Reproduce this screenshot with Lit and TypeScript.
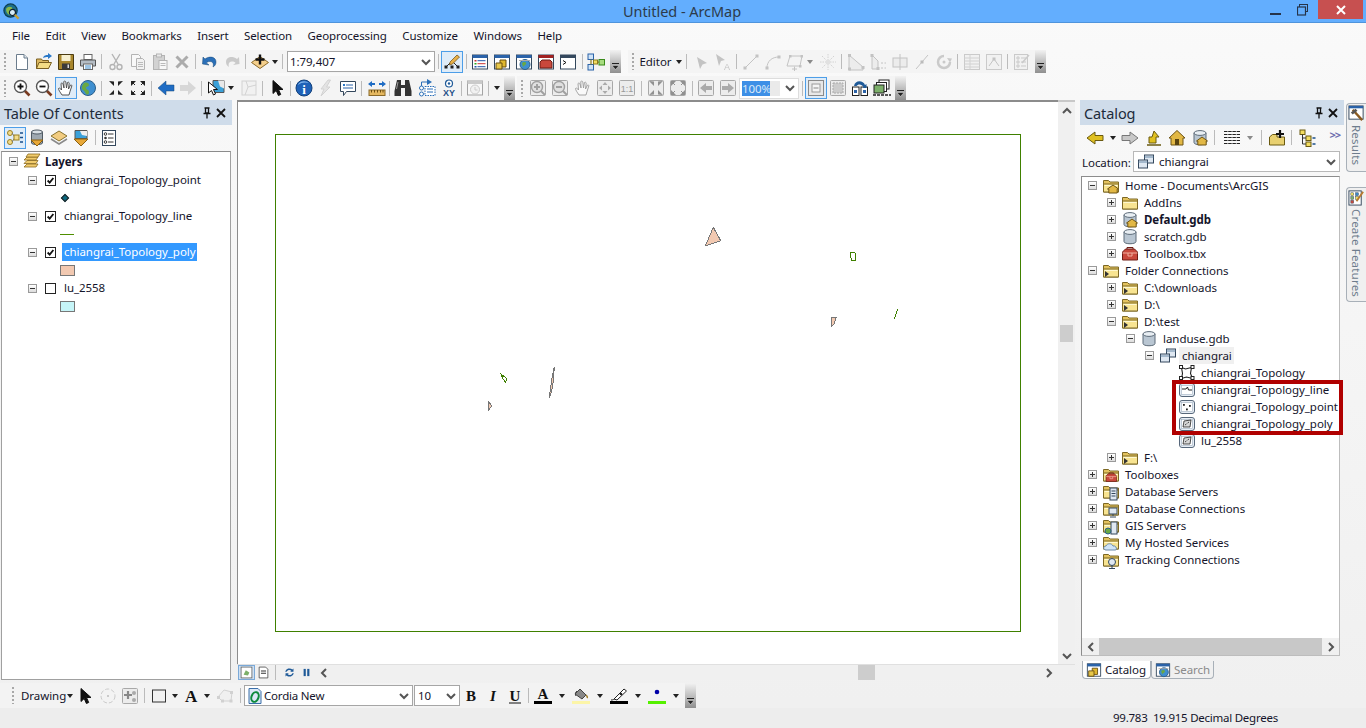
import { LitElement, html, svg, css } from 'lit';
import { customElement } from 'lit/decorators.js';

// ---- icon pieces, all on an 18x18 grid ----
const BLUE = '#2a6fb8';
const folderBase = svg`<path d="M1.500 15V3.500h5l1.500 1.500h8.500V15z" fill="#e3c25e" stroke="#7d6824"/><path d="M1.500 15V7h15v8z" fill="#f8e491" stroke="#7d6824"/><path d="M2.500 8.500h13" stroke="#fff8d0"/>`;
const cyl = svg`<path d="M3 4v9.500c0 3 12 3 12 0V4z" fill="#b9c6d2" stroke="#5d6b78"/><ellipse cx="9" cy="4" rx="6" ry="2.400" fill="#e8eef3" stroke="#5d6b78"/>`;
const house = svg`<path d="M9 9l5.500 4h-1.300v4H4.800v-4H3.500z" transform="translate(2 -1)" fill="#e2b845" stroke="#6e5414"/>`;
const toolbox = svg`<path d="M1.500 7l3-3h9l3 3v8h-15z" fill="#c9483c" stroke="#6e1c14"/><path d="M1.500 8h15M7 8v3h4V8" stroke="#f0b0a0" fill="none"/><path d="M6 4V2.500h6V4" stroke="#6e1c14" fill="none"/>`;
const win = (c: string, inner: unknown) => svg`<rect x="1.500" y="2" width="15" height="14" fill="#fff" stroke="#33475c"/><rect x="1.500" y="2" width="15" height="3" fill="${c}"/>${inner}`;
const glove = svg`<path d="M5 16c-2-3-3.500-5-3.500-6.500 1-1 2 0 3 1.500L4 4.500c1-1 1.800 0 2 .5l1 4-.2-6.500c1-.8 1.800-.2 2 .5L9.500 9l1-5.500c1-.6 1.600 0 1.700.6L11.500 10l2-4c1-.2 1.500.3 1.300 1L13 12.500 12 16z" fill="#fff" stroke="#444" stroke-width=".9"/>`;
const globe = svg`<circle cx="9" cy="9" r="7.500" fill="#3f8fd0" stroke="#2b5f8a"/><path d="M5 4c3-1 5 0 5 2s-3 1-3 3 3 1 3 4-2 3-3 2-1-3-3-4-1-5 1-7z" fill="#6aa843"/>`;
const magnifier = (mark: unknown) => svg`<path d="M11.500 11.500l5 5" stroke="#7a3b20" stroke-width="2.600"/><circle cx="7.500" cy="7.500" r="6" fill="#fff" stroke="#555" stroke-width="1.400"/>${mark}`;
const plus = svg`<path d="M4.500 7.500h6M7.500 4.500v6" stroke="#111" stroke-width="1.800"/>`;
const minus = svg`<path d="M4.500 7.500h6" stroke="#111" stroke-width="1.800"/>`;
const arrowsIn = svg`<g fill="#222"><path d="M2 2l5 5V2.500zM16 2l-5 5V2.500z"/><path d="M2 16l5-5v4.500zM16 16l-5-5v4.500z"/></g>`;
const arrowsOut = svg`<g fill="#222"><path d="M7 2H2v5zM11 2h5v5zM7 16H2v-5zM11 16h5v-5z"/><path d="M3 3l3 3M15 3l-3 3M3 15l3-3M15 15l-3-3" stroke="#222"/></g>`;
const greyBox = (inner: unknown) => svg`<rect x="1.500" y="1.500" width="15" height="15" rx="1" fill="#ececec" stroke="#a8a8a8"/>${inner}`;
const cursor = svg`<path d="M4 1.500v13l3.200-3 2.200 5 2.300-1-2.200-5h4.500z" fill="#111" stroke="#111"/>`;
const featureClass = (inner: unknown) => svg`<rect x="1.500" y="2.500" width="15" height="13" rx="2.500" fill="#e6edf5" stroke="#56677a"/><rect x="3.500" y="4.500" width="11" height="9" fill="#fff" stroke="#9fb0c0" stroke-width=".6"/>${inner}`;
const barLetter = (style: string, letter: string, underline = false) =>
  svg`<text x="9" y="14" text-anchor="middle" font-family="Liberation Serif" font-size="15" fill="#111" style="${style}">${letter}</text>${underline ? svg`<path d="M3 16h12" stroke="#111"/>` : ''}`;
const swatchLetter = svg`<text x="9" y="12" text-anchor="middle" font-family="Liberation Serif" font-weight="700" font-size="15" fill="#111">A</text><rect x="0" y="14" width="18" height="3" fill="#000"/>`;

const ICONS: Record<string, unknown> = {
  new: svg`<path d="M3.500 1.500h7.500l3.500 3.500v11.500h-11z" fill="#fff" stroke="#6b7c8c"/><path d="M11 1.500v3.500h3.500" fill="#dde5ec" stroke="#6b7c8c"/>`,
  open: svg`<path d="M1.500 15.500V6h5l1 1.500h6v8z" fill="#dcb860" stroke="#7a5f20"/><path d="M1.500 15.500l2.500-6h12.500l-3 6z" fill="#f5dc84" stroke="#7a5f20"/><path d="M8 5c1-3 3-3 5-3V0l4 3-4 3V4c-2 0-3 0-5 1z" fill="#2a78c8"/>`,
  save: svg`<path d="M1.500 1.500h15v15h-15z" fill="#a8862c" stroke="#4a3a10"/><rect x="4.500" y="2" width="9" height="6" fill="#f6efd0"/><rect x="5" y="10.500" width="8" height="6" fill="#3a3a3a"/><rect x="10.500" y="11.500" width="1.500" height="3.500" fill="#ddd"/>`,
  print: svg`<rect x="5" y="1.500" width="8" height="5" fill="#fff" stroke="#666"/><path d="M1.500 7h15v6h-15z" fill="#b4bcc4" stroke="#555"/><rect x="4.500" y="11" width="9" height="5.500" fill="#fff" stroke="#666"/><path d="M6 13h6M6 15h6" stroke="#3a88c8"/>`,
  cut: svg`<path d="M5 1l6 10M13 1L7 11" stroke="#666" stroke-width="1.400"/><circle cx="5.500" cy="14" r="2.500" fill="none" stroke="#666" stroke-width="1.400"/><circle cx="12.500" cy="14" r="2.500" fill="none" stroke="#666" stroke-width="1.400"/>`,
  copy: svg`<path d="M2.500 1.500h7l2 2v10h-9z" fill="#fff" stroke="#666"/><path d="M7.500 5.500h6l2 2v9h-8z" fill="#eee" stroke="#666"/><path d="M9 9.500h5M9 11.500h5M9 13.500h5" stroke="#777"/>`,
  paste: svg`<rect x="2.500" y="2.500" width="11" height="14" fill="#aaa" stroke="#666"/><rect x="5.500" y="1" width="5" height="3" fill="#ddd" stroke="#666"/><rect x="8" y="7.500" width="8" height="9" fill="#fff" stroke="#666"/><path d="M9.500 10.500h5M9.500 12.500h5" stroke="#777"/>`,
  del: svg`<path d="M3.500 3.500l11 11M14.500 3.500l-11 11" stroke="#555" stroke-width="3"/>`,
  undo: svg`<path d="M4 6c5-3.500 11-2 11 3 0 2-1 4-3 5 1-3 0-5.500-3-5.500-2 0-3 .5-3.500 1.500L8 12 1.500 11 2 4z" fill="${BLUE}" stroke="#174878" stroke-width=".5"/>`,
  redo: svg`<path d="M14 6C9 2.500 3 4 3 9c0 2 1 4 3 5-1-3 0-5.500 3-5.500 2 0 3 .5 3.500 1.500L10 12l6.500-1L16 4z" fill="#999"/>`,
  add: svg`<path d="M9 3.500L17.500 9.500 9 15.500.5 9.500z" fill="#f4cf8c" stroke="#8a6a2a"/><path d="M9 1.500v10M4.500 6.500h9" stroke="#111" stroke-width="2.400"/>`,
  edit: svg`<path d="M3 14L9 8l6 6" fill="none" stroke="#222"/><rect x="1.500" y="12.500" width="3" height="3" fill="#222"/><rect x="7.500" y="12.500" width="3" height="3" fill="#222"/><rect x="13.500" y="12.500" width="3" height="3" fill="#222"/><path d="M7 9l7-7 2.500 2-7 7-3 1z" fill="#e8b048" stroke="#6a4c10" stroke-width=".7"/>`,
  toc: win('#2a62a8', svg`<rect x="3.500" y="7" width="2" height="1.500" fill="#c33"/><path d="M6.500 7.700h8" stroke="#25a"/><rect x="3.500" y="10" width="2" height="1.500" fill="#2a2"/><path d="M6.500 10.700h8" stroke="#c33"/><rect x="3.500" y="13" width="2" height="1.500" fill="#25a"/><path d="M6.500 13.700h8" stroke="#25a"/>`),
  catWin: win('#2a62a8', svg`<path d="M7 7h6v7H7z" fill="#e0b830" stroke="#6a5010"/><path d="M3 10h6v6H3z" fill="#e8c84a" stroke="#6a5010"/>`),
  searchWin: win('#2a62a8', svg`<circle cx="10" cy="11.500" r="5" fill="#3f8fd0" stroke="#2b5f8a"/><path d="M7 10c2-2 5-1 4 1s-2 1-3 3z" fill="#6aa843"/><path d="M4 7.500h11" stroke="#aaa"/>`),
  toolWin: win('#a02020', svg`<path d="M3 9l2-2h8l2 2v6H3z" fill="#c9483c" stroke="#6e1c14"/>`),
  pyWin: win('#33475c', svg`<path d="M4 7.500l3 2-3 2" fill="none" stroke="#111"/>`),
  model: svg`<rect x="1" y="1" width="5.500" height="5.500" fill="#cfe3f7" stroke="#2a62a8"/><rect x="1" y="11.500" width="5.500" height="5.500" fill="#cfe3f7" stroke="#2a62a8"/><rect x="12" y="6.500" width="5.500" height="5.500" fill="#a8dc80" stroke="#3a8a1a"/><path d="M4 6.500v5M6.500 9.200H12" stroke="#8a7a20" stroke-width="1.200"/><rect x="6.500" y="7" width="4" height="4" fill="#f2dc60" stroke="#8a7a20"/>`,
  arrowTool: svg`<path d="M5 4l10 6-4.500 1.500L8 16z" fill="#888"/>`,
  arrowA: svg`<path d="M2 1l9 6-4 1-2 5z" fill="#888"/><text x="13" y="17" text-anchor="middle" font-family="Liberation Sans" font-size="9" fill="#888">A</text>`,
  line: svg`<path d="M3 15L15 3" stroke="#888"/><rect x="1.500" y="13.500" width="3" height="3" fill="#888"/><rect x="13.500" y="1.500" width="3" height="3" fill="#888"/>`,
  arc: svg`<path d="M3 15C3 8 8 4 15 4" fill="none" stroke="#888"/><rect x="1.500" y="13.500" width="3" height="3" fill="#888"/><rect x="13.500" y="2.500" width="3" height="3" fill="#888"/>`,
  polyEd: svg`<path d="M4 3h12l-2 10H1z" fill="none" stroke="#888"/><path d="M6 16h5M8.500 13.500v5" stroke="#888"/><g fill="#888"><rect x="3" y="2" width="2.500" height="2.500"/><rect x="14.500" y="2" width="2.500" height="2.500"/><rect x="13" y="12" width="2.500" height="2.500"/></g>`,
  burst: svg`<g stroke="#aaa" stroke-dasharray="1.500 1"><path d="M9 1v16M1 9h16M3 3l12 12M15 3L3 15"/></g><circle cx="9" cy="9" r="2.500" fill="#ccc"/>`,
  cutPoly: svg`<path d="M2 2l14 12v3H2z" fill="#e4e4e4" stroke="#888"/><g fill="#888"><rect x="1" y="1" width="3" height="3"/><rect x="14.500" y="13" width="3" height="3"/><rect x="1" y="14.500" width="3" height="3"/></g>`,
  split: svg`<path d="M3 2v14h6V8z" fill="#e4e4e4" stroke="#888"/><path d="M12 15h5M12 10h5" stroke="#888" stroke-dasharray="2 1.500"/><g fill="#888"><rect x="1.500" y="1" width="3" height="3"/><rect x="7.500" y="14" width="3" height="3"/></g>`,
  reshape: svg`<rect x="2" y="5" width="14" height="9" fill="#e4e4e4" stroke="#888"/><path d="M9 1v16" stroke="#888"/>`,
  slash: svg`<path d="M3 16L15 2" stroke="#888"/><rect x="7.500" y="7.500" width="3" height="3" fill="#777"/>`,
  rotate: svg`<path d="M9 3a6 6 0 1 0 6 6" fill="none" stroke="#999" stroke-width="2.500"/><path d="M12 5l5 .5-2 4z" fill="#999"/><circle cx="9" cy="9" r="1.500" fill="#999"/>`,
  attrs: svg`<rect x="1.500" y="1.500" width="15" height="15" fill="#eee" stroke="#999"/><path d="M1.500 5h15M1.500 8h15M1.500 11h15M1.500 14h15" stroke="#aaa"/><path d="M7 1.500v15" stroke="#aaa"/>`,
  sketch: svg`<rect x="1.500" y="1.500" width="15" height="15" fill="#eee" stroke="#999"/><path d="M4 13l5-7 5 7" fill="none" stroke="#888"/><rect x="7.500" y="4.500" width="3" height="3" fill="#888"/>`,
  form: svg`<rect x="1.500" y="1.500" width="13" height="15" fill="#eee" stroke="#999"/><path d="M4 4h2v2H4zM4 8h2v2H4zM4 12h2v2H4zM8 5h5M8 9h5M8 13h5" fill="none" stroke="#999"/><path d="M9 10l7-8" stroke="#999" stroke-width="1.500"/>`,
  zoomIn: magnifier(plus),
  zoomOut: magnifier(minus),
  hand: glove,
  globe,
  fixedIn: arrowsIn,
  fixedOut: arrowsOut,
  back: svg`<path d="M1 9l8-7v4h8v6H9v4z" fill="#1f6cc4" stroke="#174878" stroke-width=".5"/>`,
  fwd: svg`<path d="M17 9L9 2v4H1v6h8v4z" fill="#b5b5b5"/>`,
  selFeat: svg`<path d="M6 1.500h11v12H6z" fill="#3aa0d8" stroke="#555"/><path d="M11 1.500l2 6 4 2v-8z" fill="#e8e8e8"/><path d="M1.500 3v11l3-2.500 2 4.500 2-1-2-4.500h4z" fill="#fff" stroke="#111"/>`,
  clear: svg`<rect x="2" y="2" width="14" height="14" fill="#efefef" stroke="#aaa"/><path d="M6 2l2 6-3 8M8 8l8-2" fill="none" stroke="#aaa"/>`,
  select: cursor,
  info: svg`<circle cx="9" cy="9" r="8" fill="#1f62b8" stroke="#12407a"/><path d="M7 2.500a7 5 0 0 1 7 1.500c-3-1-8-1-11 2 0-1.500 2-3 4-3.500z" fill="#7fb4ea"/><text x="9" y="15" text-anchor="middle" font-family="Liberation Serif" font-weight="700" font-size="13" fill="#fff">i</text>`,
  bolt: svg`<path d="M11 1L4 10h3l-3 7 9-9H9.500l4-7z" fill="#d0d0d0" stroke="#aaa"/>`,
  popup: svg`<path d="M1.500 2.500h15v10h-9l-3 4v-4h-3z" fill="#fff" stroke="#33475c"/><path d="M4 5h2v2H4z" fill="#2a78c8"/><path d="M7 6h7M4 9h10" stroke="#2a62a8"/>`,
  measure: svg`<rect x="1" y="11" width="16" height="5.500" fill="#e5b860" stroke="#8a6a2a"/><path d="M3.500 11v2.500M6.500 11v2.500M9.500 11v2.500M12.500 11v2.500M15 11v2.500" stroke="#6a4c10"/><path d="M0 5l4-3v2h3v2H4v2zM18 5l-4-3v2h-3v2h3v2z" fill="#1f6cc4"/>`,
  binoc: svg`<path d="M3 1h4v5h4V1h4l2.500 11v5H11V9H7v8H.5v-5z" fill="#333"/><path d="M4 3l-1.500 7" stroke="#999"/>`,
  route: svg`<circle cx="3.500" cy="9" r="2" fill="#fff" stroke="${BLUE}"/><circle cx="3.500" cy="15" r="2" fill="#fff" stroke="${BLUE}"/><path d="M3.500 7V3h6" fill="none" stroke="${BLUE}"/><path d="M9 0l5 3-5 3z" fill="${BLUE}"/><rect x="7" y="7.500" width="10" height="9" fill="#fff" stroke="${BLUE}" stroke-dasharray="1.500 1"/><path d="M9 10h6M9 13h6" stroke="${BLUE}"/>`,
  xy: svg`<circle cx="9" cy="4.500" r="3.500" fill="#fff" stroke="#1f5a98" stroke-width="1.200"/><circle cx="9" cy="4.500" r="1.200" fill="#1f5a98"/><text x="9" y="17" text-anchor="middle" font-family="Liberation Sans" font-weight="700" font-size="9" fill="#1f4f88">XY</text>`,
  clock: win('#999', svg`<circle cx="9" cy="10.500" r="4.500" fill="#eee" stroke="#999"/><path d="M9 8v3h2.500" fill="none" stroke="#999"/>`),
  viewer: svg`<rect x="1.500" y="2" width="15" height="13" fill="#fff" stroke="#33475c"/><rect x="1.500" y="2" width="15" height="2.500" fill="#2a62a8"/><circle cx="8" cy="9.500" r="3.500" fill="#fff" stroke="#333"/><path d="M6.300 9.500h3.400M8 7.800v3.400" stroke="#111"/><path d="M10.500 12l4 4.500" stroke="#7a3b20" stroke-width="2"/>`,
  gIn: greyBox(svg`<circle cx="8" cy="8" r="5.500" fill="#e0e0e0" stroke="#a0a0a0" stroke-width="1.400"/><path d="M5 8h6M8 5v6" stroke="#a0a0a0" stroke-width="2"/><path d="M12 12l4 4" stroke="#a0a0a0" stroke-width="2"/>`),
  gOut: greyBox(svg`<circle cx="8" cy="8" r="5.500" fill="#e0e0e0" stroke="#a0a0a0" stroke-width="1.400"/><path d="M5 8h6" stroke="#a0a0a0" stroke-width="2"/><path d="M12 12l4 4" stroke="#a0a0a0" stroke-width="2"/>`),
  gHand: svg`<g opacity=".5">${glove}</g>`,
  gFull: greyBox(svg`<path d="M9 3l2.500 3h-5zM9 15l2.500-3h-5zM3 9l3-2.500v5zM15 9l-3-2.500v5z" fill="#aaa"/>`),
  g11: greyBox(svg`<text x="9" y="13" text-anchor="middle" font-family="Liberation Sans" font-size="9" fill="#999">1:1</text>`),
  gFixIn: greyBox(svg`<g opacity=".45">${arrowsIn}</g>`),
  gFixOut: greyBox(svg`<g opacity=".45">${arrowsOut}</g>`),
  gBack: greyBox(svg`<path d="M3 9l6-5v3h6v4H9v3z" fill="#aaa"/>`),
  gFwd: greyBox(svg`<path d="M15 9L9 4v3H3v4h6v3z" fill="#aaa"/>`),
  page: svg`<rect x="1.500" y="1.500" width="15" height="15" fill="#e8e8e8" stroke="#8a8a8a"/><rect x="5" y="5" width="8" height="8" fill="#f4f4f4" stroke="#9a9a9a"/><path d="M6.500 9h5" stroke="#888"/>`,
  pageGrey: greyBox(svg`<path d="M4 4h10v10H4z" fill="#ccc" stroke="#aaa" stroke-dasharray="2 1"/>`),
  swap: svg`<rect x="1.500" y="8" width="6.500" height="8.500" fill="#fff" stroke="#222"/><rect x="10" y="8" width="6.500" height="8.500" fill="#fff" stroke="#222"/><rect x="3" y="11" width="3" height="3" fill="#2a62a8"/><rect x="12" y="11" width="3" height="3" fill="#2a62a8"/><path d="M3 7c1-6 9-6 11-1l1.500-1v4h-4l1-1C11 5 7 4.500 5.500 7z" fill="#1f5a98"/>`,
  frames: svg`<rect x="6" y="1" width="10" height="9" fill="#fff" stroke="#222"/><rect x="3.500" y="3.500" width="10" height="9" fill="#fff" stroke="#222"/><rect x="1" y="6" width="10" height="8" fill="#7cb06a" stroke="#222"/><path d="M0 16h18" stroke="#222" stroke-width="1.500" stroke-dasharray="3 1"/>`,
  byDraw: svg`<circle cx="4" cy="4" r="2.500" fill="#f2dc8a" stroke="#9a8020"/><circle cx="4" cy="13" r="2.500" fill="#f2dc8a" stroke="#9a8020"/><path d="M6 4l3 4.500L6 13" fill="none" stroke="#777"/><rect x="8" y="6" width="5" height="5" fill="#f2dc8a" stroke="#9a8020"/><path d="M14 4h3M14 8.500h3M14 13h3" stroke="#1a4f8a" stroke-width="1.500"/>`,
  bySource: svg`<path d="M3.500 3v11c0 2 11 2 11 0V3z" fill="#9ea8b0" stroke="#4f5a64"/><ellipse cx="9" cy="3" rx="5.500" ry="2" fill="#d8dfe4" stroke="#4f5a64"/><path d="M3 11h12l-6 6z" fill="#e8a838" stroke="#8a6010"/>`,
  byVis: svg`<path d="M9 2l8 5-8 5-8-5z" fill="#f2cc80" stroke="#8a7430"/><path d="M1 10l8 5 8-5" fill="none" stroke="#8a8a8a" stroke-width="1.500"/>`,
  bySel: svg`<path d="M3 1.500h12v8H3z" fill="#3aa0d8" stroke="#555"/><path d="M8 2l2 4 5 1V2z" fill="#eee"/><path d="M2 10h14l-7 7z" fill="#e8a838" stroke="#8a6010"/>`,
  options: svg`<rect x="2.500" y="1.500" width="13" height="15" fill="#fff" stroke="#33475c"/><circle cx="5.500" cy="5" r="1.300" fill="none" stroke="#333"/><circle cx="5.500" cy="9" r="1.300" fill="#333"/><circle cx="5.500" cy="13" r="1.300" fill="none" stroke="#333"/><path d="M8 5h5.500M8 9h5.500M8 13h5.500" stroke="#333"/>`,
  yBack: svg`<path d="M1 9l8-6v3.500h8v5H9V15z" fill="#e0c020" stroke="#6a5a10"/>`,
  gFwd2: svg`<path d="M17 9L9 3v3.500H1v5h8V15z" fill="#c8c8c8" stroke="#777"/>`,
  up: svg`<path d="M9 2l5 6h-3v6H4V8h3z" fill="#e0c020" stroke="#6a5a10"/><path d="M2 16h14" stroke="#6a5a10" stroke-width="1.500"/>`,
  home: svg`<path d="M9 1.500L17 9h-2v7H3V9H1z" fill="#e2b845" stroke="#6e5414"/><rect x="7" y="10" width="4" height="6" fill="#5a4410"/>`,
  homeGdb: svg`${cyl}${house}`,
  grid: svg`<path d="M1 2.500h16M1 5.500h16M1 8.500h16M1 11.500h16M1 14.500h16" stroke="#222" stroke-dasharray="3.500 .7"/>`,
  newFolder: svg`<path d="M1.500 16V8l3-2.500H9V8h7.500v8z" fill="#e8d070" stroke="#6a5a10"/><path d="M12 1v8M8 5h8" stroke="#111" stroke-width="2.200"/>`,
  tree: svg`<rect x="2" y="1" width="5" height="4.500" fill="#f2dc60" stroke="#6a5a10"/><rect x="8" y="7" width="5" height="4.500" fill="#f2dc60" stroke="#6a5a10"/><rect x="8" y="13" width="5" height="4.500" fill="#f2dc60" stroke="#6a5a10"/><path d="M4.500 5.500V15H8M4.500 9H8" fill="none" stroke="#333"/><path d="M14.500 9h3M14.500 15h3" stroke="#1a4f8a" stroke-width="1.500"/>`,
  // bottom drawing toolbar
  rotateG: svg`<circle cx="9" cy="9" r="7" fill="none" stroke="#999" stroke-dasharray="4 2"/><rect x="8" y="8" width="2" height="2" fill="#999"/>`,
  addG: greyBox(svg`<path d="M7 4v8M3 8h8" stroke="#888" stroke-width="2.200"/><circle cx="13" cy="6" r="2" fill="#aaa"/><circle cx="13" cy="13" r="2" fill="#aaa"/>`),
  rect: svg`<rect x="2.500" y="3" width="13" height="12" fill="#f2f2f2" stroke="#333"/>`,
  letterA: svg`<text x="9" y="15" text-anchor="middle" font-family="Liberation Serif" font-weight="700" font-size="17" fill="#111">A</text>`,
  vertices: svg`<path d="M2 10l6-7 8 2-1 9H6z" fill="#eee" stroke="#aaa"/><g fill="#aaa"><rect x="1" y="9" width="3" height="3"/><rect x="14" y="4" width="3" height="3"/><rect x="13.500" y="12.500" width="3" height="3"/><rect x="5" y="12.500" width="3" height="3"/></g>`,
  bold: barLetter('font-weight:700', 'B'),
  italic: barLetter('font-style:italic;font-weight:700', 'I'),
  under: barLetter('font-weight:700', 'U', true),
  fontColor: swatchLetter,
  fill: svg`<path d="M3 7l5-5 6 6-4 4z" fill="#888" stroke="#444"/><path d="M5 4c-2 1-2 4-1 5" fill="none" stroke="#444"/><path d="M14 8c1 1 2 2 1 3" fill="none" stroke="#a08030" stroke-width="1.500"/><rect x="0" y="14" width="18" height="3" fill="#fcf5a8"/>`,
  pen: svg`<path d="M4 12L14 2l2.500 2L7 13z" fill="#fff" stroke="#222"/><circle cx="11" cy="7" r="1.300" fill="#222"/><path d="M1 13c2 0 3-.5 3-1" stroke="#222" fill="none"/><rect x="0" y="14" width="18" height="3" fill="#000"/>`,
  marker: svg`<circle cx="9" cy="5" r="2.300" fill="#0000a8"/><rect x="0" y="14" width="18" height="3" fill="#55f000"/>`,
  // tree symbols
  layers: svg`<g fill="#f2cc6c" stroke="#8a6a20" stroke-width=".8"><path d="M4 12h11l-2 3H1z"/><path d="M4 8.500h11l-2 3H1z"/><path d="M4 5h11l-2 3H1z"/><path d="M5 2h12l-2 3H3z"/></g>`,
  folder: folderBase,
  folderHome: svg`${folderBase}${house}`,
  folderLink: svg`${folderBase}<path d="M3 9l4 3-4 3z" fill="#333"/>`,
  gdb: cyl,
  gdbHome: svg`${cyl}${house}`,
  toolbox,
  dataset: svg`<rect x="7.500" y="2" width="9" height="8" fill="#dfe8f2" stroke="#33475c"/><rect x="1.500" y="7" width="9" height="8" fill="#dfe8f2" stroke="#33475c"/><path d="M1.500 9h9M7.500 4h9" stroke="#6b8aa8"/>`,
  topo: svg`<path d="M3.500 3.500l4 1.500 6-1.500-1 6 2 5-6-1.500-5 1.500 1-5z" fill="none" stroke="#222" stroke-width="1.100"/><g fill="#fff" stroke="#222"><rect x="1.500" y="1.500" width="3" height="3"/><rect x="13" y="1.500" width="3" height="3"/><rect x="1.500" y="12.500" width="3" height="3"/><rect x="13" y="12.500" width="3" height="3"/></g>`,
  fcLine: featureClass(svg`<path d="M4 8h4l1.500-2 1 3H14" fill="none" stroke="#222"/>`),
  fcPoint: featureClass(svg`<g fill="#222"><rect x="5" y="6" width="1.800" height="1.800"/><rect x="11" y="7" width="1.800" height="1.800"/><rect x="8" y="10.500" width="1.800" height="1.800"/></g>`),
  fcPoly: featureClass(svg`<path d="M5 12l1-6 7-1-1 7z" fill="#d8d8d8" stroke="#222" stroke-width=".8"/><path d="M7 10l4-3" stroke="#222" stroke-dasharray="1 1"/>`),
  serverFolder: svg`${folderBase}<rect x="8" y="5" width="7" height="12" fill="#dfe8f2" stroke="#33475c"/><path d="M9.500 8h4M9.500 10.500h4M9.500 13h4" stroke="#33475c"/>`,
  dbConn: svg`${folderBase}<rect x="7" y="8" width="8" height="6" fill="#dfe8f2" stroke="#33475c"/><path d="M11 14v2M8 17h6" stroke="#33475c"/>`,
  gisFolder: svg`${folderBase}<rect x="9" y="5" width="6" height="12" fill="#dfe8f2" stroke="#33475c"/><circle cx="6" cy="14" r="3" fill="#6aa843" stroke="#2b5f8a"/>`,
  cloud: svg`${folderBase}<path d="M4 16c-3 0-3-4 0-4 1-3 6-3 7 0 3-1 5 4 2 4z" fill="#cfe4f7" stroke="#6b8aa8"/>`,
  track: svg`${folderBase}<circle cx="10" cy="11" r="3.500" fill="#dfe8f2" stroke="#33475c"/><path d="M10 14.500V17M7 17.500h6" stroke="#33475c"/>`,
  toolboxFolder: svg`${folderBase}<g transform="translate(3 5) scale(.7)">${toolbox}</g>`,
  data: svg`<rect x="1.500" y="1.500" width="15" height="15" fill="#fff" stroke="#555"/><path d="M5 12l3-6 5 3-2 4z" fill="#7cb06a"/>`,
  layout: svg`<path d="M3 1.500h9l3 3v12H3z" fill="#fff" stroke="#333"/><path d="M5.500 7h7M5.500 10h7" stroke="#333" stroke-width="1.500"/>`,
  refresh: svg`<path d="M3 8a6 6 0 0 1 10-3l1.500-1.500V8H10l1.500-1.500A4 4 0 0 0 5 8zM15 10a6 6 0 0 1-10 3l-1.500 1.500V10H8l-1.500 1.500A4 4 0 0 0 13 10z" fill="#1f5a98"/>`,
  pause: svg`<rect x="5" y="4" width="3" height="10" fill="#1f5a98"/><rect x="10" y="4" width="3" height="10" fill="#1f5a98"/>`,
  arcLogo: svg`<circle cx="8" cy="8" r="7" fill="#1c6f8a" stroke="#0d3f52" stroke-width="1.400"/><path d="M4 5c3-2 6-1 6 1s-3 1-3 3 3 1 2 3-4 0-5-2-1-4 0-5z" fill="#8ab84a"/><circle cx="10" cy="10" r="3.200" fill="#d8eef8" stroke="#123" stroke-width="1.200"/><path d="M12.500 12.500l4 4" stroke="#c9a030" stroke-width="2.400"/>`,
};

type Item = string | number;

const ROW1A: Item[] = ['grip', 'new', 'open', 'save', 'print', '|', '~cut', '~copy', '~paste', '~del', '|', 'undo', '~redo', '|', 'add', 'v', '|', 1.5, 'scale', '|', '#edit', '|', 'toc', 'catWin', 'searchWin', 'toolWin', 'pyWin', '|', 'model', 3, 'handle'];
const ROW1B: Item[] = ['grip', 'Editor', 'v', '|', '~arrowTool', '~arrowA', '|', '~line', '~arc', '~polyEd', 'v~', 2, '~burst', '|', '~cutPoly', '~split', '~reshape', '~slash', '~rotate', '|', '~attrs', '~sketch', '|', '~form', 2, 'handle'];
const ROW2A: Item[] = ['grip', 'zoomIn', 'zoomOut', '#hand', 'globe', '|', 'fixedIn', 'fixedOut', '|', 'back', '~fwd', '|', 'selFeat', 'v', 2, '~clear', '|', 1, 'select', '!', 'info', '~bolt', 'popup', '|', 1, 'measure', '!', 'binoc', 2, 'route', 'xy', '!', '~clock', '|', 1, 'viewer', 2, 'handle'];
const ROW2B: Item[] = ['grip', 'gIn', 'gOut', 1, 'gHand', 'gFull', 'g11', '|', 1, 'gFixIn', 'gFixOut', '|', 'gBack', 'gFwd', 'pct', '|', '#page', 'pageGrey', 'swap', 'frames', 2, 'handle'];
const TOC_BAR: Item[] = ['#byDraw', 'bySource', 'byVis', 'bySel', '|', 'options'];
const CAT_BAR: Item[] = ['yBack', 'v13', 'gFwd2', 2, 'up', 1, 'home', 1, 'homeGdb', '|', 4, 'grid', 'v14~', 1, '|', 2, 'newFolder', '|', 2, 'tree'];
const DRAW_BAR: Item[] = ['grip', 'Drawing', 'v', 1, 'select', '~rotateG', 'addG', '|', 1, 'rect', 'v', 1, 'letterA', 'v10', 2, '~vertices', 1, '|', 1, 'fontBox', 1, 'sizeBox', 'bold', 'italic', 'under', '!', 2, 'fontColor', 'v16', 'fill', 'v16', 'pen', 'v16', 'marker', 'v16', 1, 'handle'];

const MENU = ['File', 'Edit', 'View', 'Bookmarks', 'Insert', 'Selection', 'Geoprocessing', 'Customize', 'Windows', 'Help'];

const CATALOG: [number, string, string, string][] = [
  [0, '-', 'folderHome', 'Home - Documents\\ArcGIS'],
  [1, '+', 'folder', 'AddIns'],
  [1, '+', 'gdbHome', '*Default.gdb'],
  [1, '+', 'gdb', 'scratch.gdb'],
  [1, '+', 'toolbox', 'Toolbox.tbx'],
  [0, '-', 'folderLink', 'Folder Connections'],
  [1, '+', 'folderLink', 'C:\\downloads'],
  [1, '+', 'folderLink', 'D:\\'],
  [1, '-', 'folderLink', 'D:\\test'],
  [2, '-', 'gdb', 'landuse.gdb'],
  [3, '-', 'dataset', '>chiangrai'],
  [4, '', 'topo', 'chiangrai_Topology'],
  [4, '', 'fcLine', 'chiangrai_Topology_line'],
  [4, '', 'fcPoint', 'chiangrai_Topology_point'],
  [4, '', 'fcPoly', 'chiangrai_Topology_poly'],
  [4, '', 'fcPoly', 'lu_2558'],
  [1, '+', 'folderLink', 'F:\\'],
  [0, '+', 'toolboxFolder', 'Toolboxes'],
  [0, '+', 'serverFolder', 'Database Servers'],
  [0, '+', 'dbConn', 'Database Connections'],
  [0, '+', 'gisFolder', 'GIS Servers'],
  [0, '+', 'cloud', 'My Hosted Services'],
  [0, '+', 'track', 'Tracking Connections'],
];

const TOC_LAYERS = [
  { name: 'chiangrai_Topology_point', on: true, sym: 'point' },
  { name: 'chiangrai_Topology_line', on: true, sym: 'line' },
  { name: 'chiangrai_Topology_poly', on: true, sym: 'poly', sel: true },
  { name: 'lu_2558', on: false, sym: 'lu' },
];

const icon = (name: string, size = 18) =>
  html`<svg viewBox="0 0 18 18" width=${size} height=${size}>${ICONS[name]}</svg>`;

const chevron = (d: string) =>
  html`<svg viewBox="0 0 10 10" width="10" height="10"><path d=${d} fill="none" stroke="#555" stroke-width="2"/></svg>`;
const CH_DOWN = 'M1 3l4 4 4-4';
const CH_UP = 'M1 7l4-4 4 4';
const CH_LEFT = 'M7 1L3 5l4 4';
const CH_RIGHT = 'M3 1l4 4-4 4';

@customElement('app-root')
export class AppRoot extends LitElement {
  static styles = css`
    :host {
      display: flex;
      flex-direction: column;
      width: 1366px;
      height: 728px;
      overflow: hidden;
      background: linear-gradient(#fafafa 0, #f8f8f8 100px, #f0f0f0 700px);
      font: 11.5px 'Noto Sans', sans-serif;
      letter-spacing: -0.05px;
      color: #14142a;
      position: relative;
    }
    svg { display: block; flex: none; }

    .title {
      height: 23px;
      flex: none;
      background: #63aefe;
      border-bottom: 1px solid #4f94dc;
      box-sizing: border-box;
      display: flex;
      align-items: center;
      padding-left: 3px;
    }
    .title-text {
      flex: 1;
      text-align: center;
      font-size: 14.5px;
      color: #2c3b4b;
      padding-left: 82px;
      margin-top: -1px;
    }
    .win-btns { display: flex; align-items: flex-start; align-self: flex-start; padding-right: 3px; }
    .win-btn { width: 27px; height: 19px; display: flex; align-items: center; justify-content: center; }
    .win-btn.close { width: 45px; background: #c75050; margin-left: 2px; }

    .menu { height: 27px; flex: none; box-sizing: border-box; padding: 0 0 2px 12px; display: flex; align-items: center; gap: 15.5px; letter-spacing: -0.1px; }

    .row { display: flex; flex: none; }
    .row1 { height: 23px; margin-bottom: 3px; }
    .row2 { height: 24px; }
    .bar { display: flex; align-items: center; background: #f4f4f4; }
    .bar.second { margin-left: 7px; }
    .bar.second.row2b { margin-left: 2px; }
    .grip {
      width: 2px;
      height: 17px;
      margin: 0 4.5px 0 4px;
      background: repeating-linear-gradient(#a8a8a8 0 2px, transparent 2px 4px);
    }
    .slot { width: 22px; height: 22px; display: flex; align-items: center; justify-content: center; flex: none; box-sizing: border-box; }
    .slot.active { background: #dfecf8; border: 1px solid #4d9ee8; }
    .slot.off svg { filter: grayscale(1); opacity: .45; }
    .sep { width: 6px; flex: none; display: flex; justify-content: center; }
    .sep.narrow { width: 4px; }
    .sep::before { content: ''; width: 1px; height: 15px; background: #bbb; }
    .caret { width: 9px; flex: none; display: flex; justify-content: center; }
    .caret::before { content: ''; border: 3.5px solid transparent; border-top: 4px solid #222; border-bottom: 0; }
    .caret.off::before { border-top-color: #8a8a8a; }
    .handle {
      width: 11px;
      align-self: stretch;
      flex: none;
      background: linear-gradient(#f2f2f2, #8f8f8f);
      display: flex;
      align-items: flex-end;
      justify-content: center;
      padding-bottom: 3px;
      box-sizing: border-box;
    }
    .bar-text { padding: 0 0 0 1px; white-space: nowrap; flex: none; box-sizing: border-box; }
    .editor-label { width: 36px; }
    .drawing-label { width: 45px; }

    .combo {
      box-sizing: border-box;
      height: 21px;
      flex: none;
      background: #fff;
      border: 1px solid #a6a6a6;
      display: flex;
      align-items: center;
      justify-content: space-between;
      padding: 0 3px;
    }
    .combo.scale { width: 148px; padding-left: 2px; }
    .combo.pct { width: 60px; border-color: #ddd; padding-left: 2px; }
    .pct-val { background: #3d8fe6; color: #dbe9f8; width: 28px; height: 15px; line-height: 15px; white-space: nowrap; }
    .pct-rest { background: #eaeaea; width: 10px; height: 15px; margin-right: auto; }
    .combo.font { width: 169px; padding-left: 3px; letter-spacing: -0.2px; }
    .combo.size { width: 46px; padding-left: 3px; }
    .combo-left { display: flex; align-items: center; gap: 1px; }

    .main { display: flex; height: 580px; flex: none; }
    .panel { display: flex; flex-direction: column; flex: none; }
    .toc { width: 232px; }
    .cat { width: 264px; margin-left: 5px; position: relative; }
    .panel-title {
      height: 25px;
      flex: none;
      box-sizing: border-box;
      background: #cfdcea;
      display: flex;
      align-items: center;
      font-size: 14.5px;
      letter-spacing: -0.1px;
      color: #1d2b3a;
      padding: 0 6px 0 4px;
    }
    .panel-title span { flex: 1; }
    .panel-tools { display: flex; align-items: center; gap: 4px; }
    .panel-bar { height: 25px; flex: none; display: flex; align-items: center; padding-left: 4px; }
    .more { margin-left: auto; margin-right: 4px; align-self: flex-start; margin-top: 2px; color: #6f6fb0; font-size: 11px; font-weight: 700; letter-spacing: -1px; }

    .tree {
      flex: 1;
      background: #fff;
      overflow: hidden;
      box-sizing: border-box;
      min-height: 0;
    }
    .toc-tree { margin: 1px 1px 0 1px; border: 1px solid #a0a0a0; border-top-color: #8c8c8c; }
    .toc-row { height: 18px; display: flex; align-items: center; white-space: nowrap; }
    .toc-row.root { padding-left: 7px; height: 19px; padding-bottom: 1px; box-sizing: border-box; }
    .toc-row.root b { margin-left: 4px; }
    .toc-row.root svg { margin-left: 5px; }
    .toc-row.layer { padding-left: 26px; }
    .toc-row.symbol { padding-left: 58px; }
    .check {
      width: 9px;
      height: 9px;
      margin-left: 8px;
      border: 1px solid #222;
      background: #fff;
      flex: none;
      box-sizing: content-box;
    }
    .layer-name { margin-left: 6px; padding: 0 1px 0 2px; height: 18px; line-height: 18px; }
    .layer-name.sel { background: #3399ff; color: #fff; }
    .exp {
      width: 9px;
      height: 9px;
      box-sizing: border-box;
      border: 1px solid #9a9a9a;
      background: linear-gradient(#fff, #dcdcdc);
      flex: none;
      position: relative;
    }
    .exp.minus::before, .exp.plus::before {
      content: '';
      position: absolute;
      left: 1px;
      right: 1px;
      top: 3px;
      height: 1px;
      background: #333;
    }
    .exp.plus::after {
      content: '';
      position: absolute;
      top: 1px;
      bottom: 1px;
      left: 3px;
      width: 1px;
      background: #333;
    }
    .exp.none { visibility: hidden; }
    .sym-point { width: 6px; height: 6px; margin-left: 2px; background: #0b6a80; border: 1px solid #222; transform: rotate(45deg); box-sizing: border-box; }
    .sym-line { width: 14px; height: 1px; background: #4f8f00; }
    .sym-poly, .sym-lu { width: 13px; height: 9px; border: 1px solid #777; }
    .sym-poly { background: #f2c9b1; }
    .sym-lu { background: #c6f5f8; }

    .view { width: 838px; margin-left: 5px; display: flex; flex-direction: column; flex: none; }
    .view-top { flex: 1; display: flex; min-height: 0; }
    .map {
      flex: none;
      width: 821px;
      box-sizing: border-box;
      background: #fff;
      border-top: 2px solid #8c8c8c;
      border-left: 1px solid #8c8c8c;
    }
    .map path, .map rect { shape-rendering: crispEdges; }
    .vscroll { width: 17px; flex: none; background: #f0f0f0; border-top: 2px solid #c8c8c8; display: flex; flex-direction: column; }
    .arrow { width: 17px; height: 17px; flex: none; display: flex; align-items: center; justify-content: center; }
    .vtrack { flex: 1; }
    .vthumb { height: 17px; width: 13px; margin: 206px 2px 0; background: #cdcdcd; }
    .hbar { height: 16px; box-sizing: border-box; flex: none; display: flex; align-items: center; background: #f0f0f0; border-top: 1px solid #e0e0e0; padding-left: 1px; }
    .vb { width: 17px; height: 15px; flex: none; display: flex; align-items: center; justify-content: center; box-sizing: border-box; }
    .vb.active { background: #cfe0f2; border: 1px solid #7aa9d8; }
    .htrack { flex: 1; align-self: stretch; }
    .hthumb { height: 100%; width: 17px; margin-left: 526px; background: #cdcdcd; }
    .hcorner { width: 18px; flex: none; }

    .loc { height: 23px; flex: none; display: flex; align-items: flex-start; padding-left: 2px; margin-top: 1px; }
    .loc-label { width: 51px; flex: none; line-height: 24px; }
    .loc .combo { width: 207px; border-color: #b8b8b8; padding-left: 2px; }
    .loc svg { margin-left: 1px; }
    .cat-tree {
      margin: 2px 4px 0 1px;
      flex: none;
      height: 480px;
      display: flex;
      flex-direction: column;
      border: 1px solid #bdbdbd;
      border-top-color: #8c8c8c;
      border-left-color: #8c8c8c;
    }
    .rows { flex: 1; min-height: 0; }
    .cat-row { height: 17px; display: flex; align-items: center; white-space: nowrap; position: relative; }
    .cat-row .exp { margin-right: 5px; }
    .cat-row svg { margin-right: 2px; }
    .cat-name { height: 17px; line-height: 17px; padding: 0 2px 0 3px; }
    .cat-name.selected { background: #f0f0f0; }
    .cat-name.strong { font-weight: 700; }
    .hscroll { height: 17px; flex: none; display: flex; background: #f0f0f0; }
    .hscroll-thumb { flex: 1; background: #c8c8c8; }

    .tabs { display: flex; height: 18px; margin: 5px 0 0 2px; flex: none; }
    .tab {
      display: flex;
      align-items: center;
      gap: 3px;
      padding: 0 3px;
      border: 1px solid #a8b0b8;
      border-top: 0;
      border-radius: 0 0 4px 4px;
      background: #f0f0f0;
    }
    .tab.on { background: #fff; width: 69px; box-sizing: border-box; }
    .tab.muted { color: #8a8a8a; width: 63px; box-sizing: border-box; }

    .side { width: 20px; margin-left: 2px; flex: none; display: flex; flex-direction: column; padding-top: 3px; }
    .side-tab {
      box-sizing: border-box;
      border: 1px solid #a8b0b8;
      border-right: 0;
      border-radius: 4px 0 0 4px;
      background: #f0f0f0;
      writing-mode: vertical-rl;
      font-size: 11.5px;
      letter-spacing: .2px;
      white-space: nowrap;
      color: #6d7c8c;
      display: flex;
      align-items: center;
      gap: 3px;
      padding-top: 1px;
    }
    .side-tab.results { height: 69px; }
    .side-tab.create { height: 115px; margin-top: 15px; }

    .draw { height: 25px; flex: none; margin-top: 3px; display: flex; }
    .draw .bar { background: #f3f3f3; }
    .draw .grip { margin-left: 12px; margin-right: 6px; }
    .status { flex: 1; background: #ededed; padding-left: 1113px; white-space: pre; line-height: 20px; letter-spacing: -0.25px; }

    /* red annotation drawn over the catalog tree */
    .callout {
      position: absolute;
      left: 1172px;
      top: 380px;
      width: 171px;
      height: 55px;
      box-sizing: border-box;
      border: 4px solid #b00000;
    }
  `;

  private renderItem(it: Item) {
    if (typeof it === 'number') return html`<span style="width:${it}px;flex:none"></span>`;
    if (it === '|') return html`<span class="sep"></span>`;
    if (it === '!') return html`<span class="sep narrow"></span>`;
    if (it === 'grip') return html`<span class="grip"></span>`;
    if (it === 'handle') {
      return html`<span class="handle"><svg viewBox="0 0 9 7" width="9" height="7"><path d="M1 .5h7" stroke="#222"/><path d="M1 2.500h7L4.500 6.500z" fill="#222" stroke="#fff" stroke-width=".4"/></svg></span>`;
    }
    if (it === 'Editor') return html`<span class="bar-text editor-label">Editor</span>`;
    if (it === 'Drawing') return html`<span class="bar-text drawing-label">Drawing</span>`;
    if (it === 'scale') return html`<span class="combo scale">1:79,407 ${chevron(CH_DOWN)}</span>`;
    if (it === 'pct') return html`<span class="combo pct"><span class="pct-val">100%</span><span class="pct-rest"></span>${chevron(CH_DOWN)}</span>`;
    if (it === 'fontBox') {
      return html`<span class="combo font"><span class="combo-left"><svg viewBox="0 0 14 16" width="14" height="16"><path d="M1 .5h9l3 3v12H1z" fill="#dbe8f6" stroke="#3a6ea8"/><ellipse cx="7" cy="9" rx="3.500" ry="5" transform="rotate(20 7 9)" fill="none" stroke="#0d8a3c" stroke-width="2"/></svg><span style="margin-left:1px">Cordia New</span></span>${chevron(CH_DOWN)}</span>`;
    }
    if (it === 'sizeBox') return html`<span class="combo size">10 ${chevron(CH_DOWN)}</span>`;
    if (it.startsWith('v')) {
      const off = it.endsWith('~');
      const w = parseInt(it.slice(1), 10);
      return html`<span class="caret ${off ? 'off' : ''}" style=${w ? `width:${w}px` : ''}></span>`;
    }
    const active = it.startsWith('#');
    const off = it.startsWith('~');
    const name = active || off ? it.slice(1) : it;
    return html`<span class="slot ${active ? 'active' : ''} ${off ? 'off' : ''}">${icon(name)}</span>`;
  }

  private renderBar(items: Item[], extra = '') {
    return html`<div class="bar ${extra}">${items.map((i) => this.renderItem(i))}</div>`;
  }

  private panelTitle(label: string) {
    return html`<div class="panel-title">
      <span>${label}</span>
      <div class="panel-tools">
        <svg viewBox="0 0 10 12" width="10" height="12"><path d="M2.500 1h5M3.500 1v5h3V1M1.500 6.500h7M5 7v4.500" fill="none" stroke="#111" stroke-width="1.300"/></svg>
        <svg viewBox="0 0 10 10" width="10" height="10"><path d="M1 1l8 8M9 1l-8 8" stroke="#111" stroke-width="1.800"/></svg>
      </div>
    </div>`;
  }

  private renderCatRow([level, exp, ic, label]: [number, string, string, string]) {
    const strong = label.startsWith('*');
    const selected = label.startsWith('>');
    const text = strong || selected ? label.slice(1) : label;
    const expClass = exp === '+' ? 'plus' : exp === '-' ? 'minus' : 'none';
    return html`<div class="cat-row" style="padding-left:${6 + level * 19}px">
      <span class="exp ${expClass}"></span>${icon(ic)}<span class="cat-name ${strong ? 'strong' : ''} ${selected ? 'selected' : ''}">${text}</span>
    </div>`;
  }

  private renderMap() {
    return svg`<rect x="275.500" y="134.500" width="745" height="497" fill="none" stroke="#3f8000"/>
      <g fill="#f2c9b1" stroke="#777">
        <path d="M713.300 227.300L720.700 240.700 705.300 246z"/>
        <path d="M831.300 317.300L836 317.700 834.300 324 832 326.300z"/>
        <path d="M554.300 366.700L553.500 380 551.500 392 549.300 397.700 550.500 388 552 378z"/>
        <path d="M488.300 401.300L491.700 405.700 488.300 410.700z"/>
      </g>
      <g fill="none" stroke="#3f8000">
        <path d="M850 253L855 252.500 855.300 260.500 851.500 260.500z"/>
        <path d="M897.700 309L894.300 319"/>
        <path d="M501 374.300L506.700 378.300 505.700 382.700 503.300 379.300z"/>
      </g>`;
  }

  render() {
    return html`
      <div class="title">
        ${icon('arcLogo', 17)}
        <div class="title-text">Untitled - ArcMap</div>
        <div class="win-btns">
          <div class="win-btn"><svg viewBox="0 0 12 12" width="12" height="12"><rect x="0" y="9" width="11" height="2" fill="#26344a"/></svg></div>
          <div class="win-btn"><svg viewBox="0 0 12 12" width="12" height="12"><rect x="2.500" y=".5" width="8" height="7" fill="none" stroke="#26344a"/><rect x=".5" y="3" width="8" height="8" fill="#63aefe" stroke="#26344a" stroke-width="1.200"/></svg></div>
          <div class="win-btn close"><svg viewBox="0 0 12 12" width="12" height="12"><path d="M2 2l8 8M10 2l-8 8" stroke="#fff" stroke-width="2"/></svg></div>
        </div>
      </div>
      <div class="menu">${MENU.map((m) => html`<span>${m}</span>`)}</div>
      <div class="row row1">${this.renderBar(ROW1A)}${this.renderBar(ROW1B, 'second')}</div>
      <div class="row row2">${this.renderBar(ROW2A)}${this.renderBar(ROW2B, 'second row2b')}</div>

      <div class="main">
        <section class="panel toc">
          ${this.panelTitle('Table Of Contents')}
          <div class="panel-bar">${TOC_BAR.map((i) => this.renderItem(i))}</div>
          <div class="tree toc-tree">
            <div class="toc-row root"><span class="exp minus"></span>${icon('layers')}<b>Layers</b></div>
            ${TOC_LAYERS.map(
              (l) => html`<div class="toc-row layer">
                  <span class="exp minus"></span>
                  <span class="check">${l.on ? html`<svg viewBox="0 0 11 11" width="9" height="9"><path d="M2 5.500l2.500 2.500L9 2.500" fill="none" stroke="#111" stroke-width="2.200"/></svg>` : ''}</span>
                  <span class="layer-name ${l.sel ? 'sel' : ''}">${l.name}</span>
                </div>
                <div class="toc-row symbol"><span class="sym-${l.sym}"></span></div>`,
            )}
          </div>
        </section>

        <section class="view">
          <div class="view-top">
            <svg class="map" viewBox="238 102 820 562" width="821" height="564">${this.renderMap()}</svg>
            <div class="vscroll">
              <div class="arrow">${chevron(CH_UP)}</div>
              <div class="vtrack"><div class="vthumb"></div></div>
              <div class="arrow">${chevron(CH_DOWN)}</div>
            </div>
          </div>
          <div class="hbar">
            <span class="vb active">${icon('data', 13)}</span>
            <span class="vb">${icon('layout', 13)}</span>
            <span class="sep"></span>
            <span style="width:3px"></span>
            <span class="vb">${icon('refresh', 13)}</span>
            <span class="vb">${icon('pause', 13)}</span>
            <span class="vb">${chevron(CH_LEFT)}</span>
            <div class="htrack"><div class="hthumb"></div></div>
            <span class="vb">${chevron(CH_RIGHT)}</span>
            <span class="hcorner"></span>
          </div>
        </section>

        <section class="panel cat">
          ${this.panelTitle('Catalog')}
          <div class="panel-bar">
            ${CAT_BAR.map((i) => this.renderItem(i))}
            <span class="more">&gt;&gt;</span>
          </div>
          <div class="loc">
            <span class="loc-label">Location:</span>
            <span class="combo"><span class="combo-left">${icon('dataset')}<span style="margin-left:3px">chiangrai</span></span>${chevron(CH_DOWN)}</span>
          </div>
          <div class="tree cat-tree">
            <div class="rows">${CATALOG.map((r) => this.renderCatRow(r))}</div>
            <div class="hscroll">
              <div class="arrow">${chevron(CH_LEFT)}</div>
              <div class="hscroll-thumb"></div>
              <div class="arrow">${chevron(CH_RIGHT)}</div>
            </div>
          </div>
          <div class="tabs">
            <div class="tab on">${icon('catWin', 16)}Catalog</div>
            <div class="tab muted">${icon('searchWin', 16)}Search</div>
          </div>
        </section>

        <aside class="side">
          <div class="side-tab results">
            <svg viewBox="0 0 18 18" width="17" height="17"><rect x="1" y="1" width="15" height="14" fill="#fff" stroke="#33475c"/><rect x="1" y="1" width="15" height="2.500" fill="#2a62a8"/><path d="M5 5l10 11" stroke="#8a5a20" stroke-width="2.500"/><path d="M3 8l5-4 2 2-5 4z" fill="#555"/></svg>
            Results
          </div>
          <div class="side-tab create">
            <svg viewBox="0 0 18 18" width="17" height="17"><rect x="1" y="2" width="13" height="15" fill="#fff" stroke="#33475c"/><g stroke="#33475c" stroke-width=".5"><rect x="3" y="4" width="3" height="3" fill="#f2dc60"/><rect x="3" y="8" width="3" height="3" fill="#7cb06a"/><rect x="3" y="12" width="3" height="3" fill="#c9483c"/><rect x="8" y="4" width="3" height="3" fill="#3a88c8"/><rect x="8" y="8" width="3" height="3" fill="#f2dc60"/></g><path d="M9 13l7-10" stroke="#b87a30" stroke-width="2"/></svg>
            Create Features
          </div>
        </aside>
      </div>

      <div class="draw">${this.renderBar(DRAW_BAR)}</div>
      <div class="status">99.783  19.915 Decimal Degrees</div>
      <div class="callout"></div>
    `;
  }
}
